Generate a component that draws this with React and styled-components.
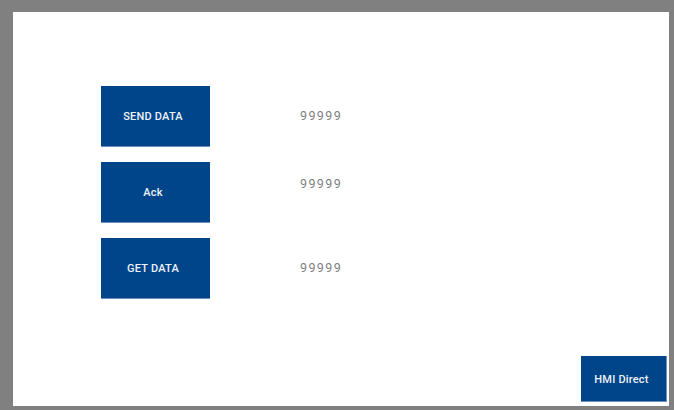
import React from 'react';
import styled, { createGlobalStyle } from 'styled-components';

const GlobalStyle = createGlobalStyle`
  html, body {
    margin: 0;
    padding: 0;
    background: #808080;
    font-family: Roboto, "Liberation Sans", sans-serif;
  }
`;

const Screen = styled.div`
  width: 674px;
  height: 410px;
  padding: 12px 5px 4px 13px;
  box-sizing: border-box;
`;

const Panel = styled.div`
  width: 656px;
  height: 394px;
  background: #ffffff;
  display: flex;
  flex-direction: column;
  box-sizing: border-box;
  padding: 74px 2px 4px 88px;
`;

const Rows = styled.div`
  display: flex;
  flex-direction: column;
  gap: 15px;
`;

const Row = styled.div`
  display: flex;
  align-items: flex-start;
  gap: 90px;
`;

const HmiButton = styled.button`
  width: ${(p) => p.$w}px;
  height: ${(p) => p.$h}px;
  background: #00458a;
  color: #eef2f7;
  border: none;
  border-bottom: 1px solid #6a8fbd;
  border-right: ${(p) => (p.$edge ? '1px solid #6a8fbd' : 'none')};
  padding: ${(p) => (p.$edge ? '1px 4px 0 0' : '0 5px 0 0')};
  font-family: Roboto, "Liberation Sans", sans-serif;
  font-size: 11px;
  font-weight: 500;
  letter-spacing: 0.2px;
  box-sizing: border-box;
  cursor: pointer;
`;

const Value = styled.span`
  margin-top: ${(p) => p.$top}px;
  font-family: Roboto, "Liberation Sans", sans-serif;
  font-size: 12.5px;
  line-height: 15px;
  letter-spacing: 1.4px;
  color: #7f7f7f;
`;

const Footer = styled.div`
  margin-top: auto;
  display: flex;
  justify-content: flex-end;
`;

const rows = [
  { id: 1, label: 'SEND DATA', value: '99999', top: 22 },
  { id: 2, label: 'Ack', value: '99999', top: 14 },
  { id: 3, label: 'GET DATA', value: '99999', top: 22 },
];

const App = () => {
  return (
    <Screen>
      <GlobalStyle />
      <Panel>
        <Rows>
          {rows.map((r) => (
            <Row key={r.id}>
              <HmiButton $w={109} $h={61}>{r.label}</HmiButton>
              <Value $top={r.top}>{r.value}</Value>
            </Row>
          ))}
        </Rows>
        <Footer>
          <HmiButton $w={86} $h={46} $edge>HMI Direct</HmiButton>
        </Footer>
      </Panel>
    </Screen>
  );
};

export default App;
